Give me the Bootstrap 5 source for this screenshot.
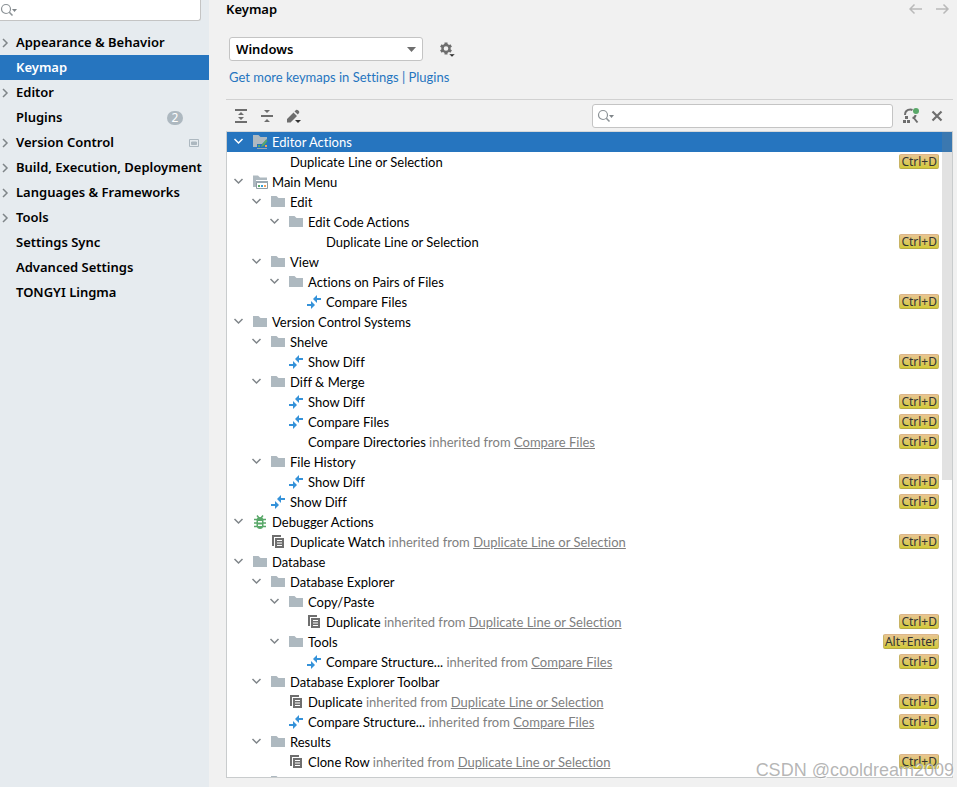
<!DOCTYPE html>
<html lang="en">
<head>
<meta charset="utf-8">
<meta name="viewport" content="width=device-width, initial-scale=1">
<title>Settings - Keymap</title>
<link href="https://cdn.jsdelivr.net/npm/bootstrap@5.3.0/dist/css/bootstrap.min.css" rel="stylesheet">
<style>
  body { font: 13px/20px Lato, "Noto Sans", sans-serif; font-variant-ligatures: none; color: #000; background: #f1f1f1; }
  svg { display: block; flex: none; }
  a { color: #2675bf; }
  .settings-side { flex: 0 0 209px; background: #e6ebef; }
  .side-search { width: 201px; height: 21px; border: 1px solid #c4c4c4; border-width: 0 1px 1px 0; border-radius: 0 0 3px 0; background: #fff; }
  .find-box input { min-width: 0; outline: 0; }
  .side-nav, .page-title, .scheme { font-family: "Noto Sans", sans-serif; }
  .side-nav { padding-top: 9px; }
  .side-nav a { height: 25px; color: #000; font-weight: 600; line-height: 25px; }
  .side-nav a.active { background: #2675bf; color: #fff; }
  .side-nav .twist { width: 16px; color: #7f8589; }
  .count-pill { width: 16px; height: 14px; margin-right: 26px; border-radius: 7px; background: #adb8c0; color: #fff; font-size: 12px; font-weight: 400; line-height: 14px; text-align: center; }
  .project-mark { margin-right: 10px; }
  .settings-main { padding: 0 4px 9px 17px; }
  .plain-btn { padding: 0; border: 0; background: none; color: #6e6e6e; }
  .page-title { margin: 0; font-size: 13px; line-height: 19px; font-weight: 600; }
  .history { padding-right: 3px; gap: 11px; }
  .history button { color: #b9b9b9; }
  .scheme { margin: 18px 0 0 3px; gap: 15px; }
  .scheme select { width: 194px; height: 24px; padding: 0 24px 0 6px; border: 1px solid #c4c4c4; border-radius: 3px; color: #000; font-size: 13px; font-weight: 600; line-height: 20px;
    background: #fff url("data:image/svg+xml,%3Csvg xmlns='http://www.w3.org/2000/svg' width='10' height='6'%3E%3Cpath fill='%236e6e6e' d='M0 0h10L5 6z'/%3E%3C/svg%3E") no-repeat right 6px center / 9px 5px; }
  .more-link { margin: 6px 0 12px 3px; }
  .tree-bar { height: 33px; padding: 0 10px 0 6px; border-top: 1px solid #d1d1d1; }
  .tree-search { flex: 0 1 301px; height: 24px; border: 1px solid #c4c4c4; border-radius: 3px; background: #fff; }
  .find-tools { margin-left: 8px; }
  .tree-box { min-height: 0; border: 1px solid #c9cccd; border-top-color: #d6d8d9; background: #fff; }
  .tree-row { height: 20px; padding-right: 13px; }
  .tree-row.chosen { background: #2675bf; color: #fff; }
  .twisty { width: 16px; height: 16px; margin: 0 5px 3px 4px; color: #7f8589; }
  .chosen .twisty { color: #fff; }
  .kind { width: 16px; height: 16px; margin-right: 4px; }
  .origin, .origin a { color: #808080; }
  kbd.keys { height: 15px; margin-bottom: 2px; padding: 0 1px; border: 1px solid #c9b465; border-top-color: #dcb68a; border-bottom-color: #b8ab45; border-radius: 2px; background: linear-gradient(#e8c592, #d2c93a); color: #333; font: 12px/13px "Noto Sans", sans-serif; }
  .scroll-thumb { top: 0; right: 0; width: 10px; height: 54%; background: rgba(128, 128, 128, .23); }
  .watermark { right: 3px; bottom: 7px; color: rgba(150, 150, 150, .7); font: 18px/20px "Liberation Sans", sans-serif; text-shadow: 1px 1px 0 rgba(255, 255, 255, .8); pointer-events: none; }
</style>
<script src="https://cdn.jsdelivr.net/npm/bootstrap@5.3.0/dist/js/bootstrap.bundle.min.js" defer></script>
</head>
<body class="vh-100 d-flex overflow-hidden">
<svg class="d-none">
  <symbol id="i-right" viewBox="0 0 16 16"><path d="M3 4l4 4-4 4" fill="none" stroke="currentColor" stroke-width="1.5"/></symbol>
  <symbol id="i-down" viewBox="0 0 16 16"><path d="M3.500 6l4 4 4-4" fill="none" stroke="currentColor" stroke-width="1.5"/></symbol>
  <symbol id="i-find" viewBox="0 0 18 16"><circle cx="6" cy="7" r="4.5" fill="none" stroke="#8c9296" stroke-width="1.2"/><path d="M9.300 10.300l3.200 3.200" stroke="#8c9296" stroke-width="1.600"/><path d="M12 7h5l-2.500 3z" fill="#7f8589"/></symbol>
  <symbol id="i-folder" viewBox="0 0 16 16"><path d="M1 2h5.500l2 2H15V13H1z" fill="#aeb9c0"/></symbol>
  <symbol id="i-editor" viewBox="0 0 16 16"><path d="M1 1h5.500l2 2H15v2l-5 5H5v3H1z" fill="#aeb9c0"/><path d="M5 14.500h10" stroke="#9aa7b0"/><path d="M6 11h2v2H6z" fill="#59a869"/><path d="M13 11h2v2h-2z" fill="#f4a15d"/><path d="M9 13l1-2.500 4-5 1.500 1.500-4 5z" fill="#59a869"/></symbol>
  <symbol id="i-menu" viewBox="0 0 16 16"><path d="M1 1.500h5l2 2h7V6H4v7H1z" fill="#aeb9c0"/><path d="M4.500 7.500h11v7h-11z" fill="#fff" stroke="#8f9ba3"/><path d="M4 7h12v2H4z" fill="#9aa7b0"/><path d="M6 11h2v2H6z" fill="#59a869"/><path d="M9 11h2v2H9z" fill="#389fd6"/><path d="M12 11h2v2h-2z" fill="#f4a15d"/></symbol>
  <symbol id="i-diff" viewBox="0 0 16 16"><g fill="#3592d9"><path d="M7 5l4-4v3h4v2h-4v3z"/><path d="M9 11l-4 4v-3H1v-2h4V7z"/></g></symbol>
  <symbol id="i-copy" viewBox="0 0 16 16"><path d="M2 1h9v2H4v9H2z" fill="#6e6e6e"/><path d="M5 4h9v10H5zM7 6v1h5V6zm0 2.500v1h5v-1zm0 2.500v1h5v-1z" fill="#6e6e6e" fill-rule="evenodd"/></symbol>
  <symbol id="i-bug" viewBox="0 0 16 16"><g stroke="#59a869" stroke-width="1.500" fill="none"><path d="M5 1.500l2 2.500M11 1.500L9 4M2 5.500h12M2 9h12M2 12.500h12"/></g><path d="M4.500 6Q5 3 8 3t3.500 3v5.500Q11 15 8 15t-3.500-3.500z" fill="#59a869"/><path d="M6 7h4v1.500H6zm0 3.500h4V12H6z" fill="#fff"/></symbol>
</svg>

<aside class="settings-side d-flex flex-column">
  <label class="side-search find-box d-flex align-items-center">
    <svg width="18" height="16"><use href="#i-find"/></svg>
    <input class="border-0 bg-transparent flex-grow-1 p-0" type="text" aria-label="Search settings">
  </label>
  <nav class="side-nav d-flex flex-column">
    <a class="d-flex align-items-center text-decoration-none" href="#"><svg class="twist" height="16"><use href="#i-right" width="16"/></svg>Appearance &amp; Behavior</a>
    <a class="active d-flex align-items-center text-decoration-none" href="#" aria-current="page"><span class="twist"></span>Keymap</a>
    <a class="d-flex align-items-center text-decoration-none" href="#"><svg class="twist" height="16"><use href="#i-right" width="16"/></svg>Editor</a>
    <a class="d-flex align-items-center text-decoration-none" href="#"><span class="twist"></span>Plugins<span class="count-pill ms-auto">2</span></a>
    <a class="d-flex align-items-center text-decoration-none" href="#"><svg class="twist" height="16"><use href="#i-right" width="16"/></svg>Version Control
      <svg class="project-mark ms-auto" width="10" height="8" fill="none" stroke="#adb8c0"><path d="M.5 .5h9v7h-9z"/><path d="M2.500 3h5v2.500h-5z" fill="#adb8c0"/></svg></a>
    <a class="d-flex align-items-center text-decoration-none text-nowrap" href="#"><svg class="twist" height="16"><use href="#i-right" width="16"/></svg>Build, Execution, Deployment</a>
    <a class="d-flex align-items-center text-decoration-none" href="#"><svg class="twist" height="16"><use href="#i-right" width="16"/></svg>Languages &amp; Frameworks</a>
    <a class="d-flex align-items-center text-decoration-none" href="#"><svg class="twist" height="16"><use href="#i-right" width="16"/></svg>Tools</a>
    <a class="d-flex align-items-center text-decoration-none" href="#"><span class="twist"></span>Settings Sync</a>
    <a class="d-flex align-items-center text-decoration-none" href="#"><span class="twist"></span>Advanced Settings</a>
    <a class="d-flex align-items-center text-decoration-none" href="#"><span class="twist"></span>TONGYI Lingma</a>
  </nav>
</aside>

<main class="settings-main d-flex flex-column flex-grow-1">
  <header class="d-flex justify-content-between align-items-center">
    <h1 class="page-title">Keymap</h1>
    <div class="history d-flex">
      <button class="plain-btn" type="button" aria-label="Back"><svg width="15" height="14" fill="none" stroke="currentColor" stroke-width="1.500"><path d="M13 6H1M5.500 1.500L1 6l4.500 4.500"/></svg></button>
      <button class="plain-btn" type="button" aria-label="Forward"><svg width="15" height="14" fill="none" stroke="currentColor" stroke-width="1.500"><path d="M1 6h12M8.500 1.500L13 6l-4.500 4.500"/></svg></button>
    </div>
  </header>

  <div class="scheme d-flex align-items-center">
    <select class="form-select" aria-label="Keymap scheme"><option>Windows</option></select>
    <button class="plain-btn" type="button" aria-label="Scheme actions">
      <svg width="18" height="18" viewBox="0 0 18 18"><g fill="currentColor"><path id="tooth" d="M6.500 2.500h3v3h-3zM6.500 11.500h3v3h-3z"/><use href="#tooth" transform="rotate(60 8 8.500)"/><use href="#tooth" transform="rotate(120 8 8.500)"/></g><circle cx="8" cy="8.500" r="3.500" fill="none" stroke="currentColor" stroke-width="2.400"/><path d="M11 14h6l-3 3z" fill="#333" stroke="#f1f1f1" stroke-width=".4"/></svg>
    </button>
  </div>
  <div class="more-link"><a class="text-decoration-none" href="#">Get more keymaps in Settings | Plugins</a></div>

  <div class="tree-bar d-flex align-items-center">
    <div class="d-flex me-auto gap-2">
      <button class="plain-btn" type="button" aria-label="Expand all"><svg width="18" height="16" fill="currentColor"><path d="M3 1h12v2H3zM3 13h12v2H3zM9 4l3 3H6zM9 12L6 9h6z"/></svg></button>
      <button class="plain-btn" type="button" aria-label="Collapse all"><svg width="18" height="16" fill="currentColor"><path d="M3 7h12v2H3zM9 5L6 2h6zM9 11l3 3H6z"/></svg></button>
      <button class="plain-btn" type="button" aria-label="Edit shortcut"><svg width="18" height="16" fill="currentColor"><path d="M3 14.500v-3.500l6.500-6.500 3.500 3.500-6.500 6.500zM10.500 3.500l1.500-1.500q1-.8 2 .2l.8.800q1 1 .2 2L13.800 6.500z"/><path d="M11 12h6l-3 3z" fill="#333"/></svg></button>
    </div>
    <label class="tree-search find-box d-flex align-items-center px-1">
      <svg width="18" height="16"><use href="#i-find"/></svg>
      <input class="border-0 bg-transparent flex-grow-1 p-0" type="text" aria-label="Search actions">
    </label>
    <div class="find-tools d-flex align-items-center gap-2">
      <button class="plain-btn" type="button" aria-label="Find actions by shortcut"><svg width="22" height="18" viewBox="0 0 22 18"><path d="M4 8q0-5.500 5.500-5.500 1 0 2 .5M14.500 8q0 2.500-3 3M12.500 10.500l4 5" fill="none" stroke="currentColor" stroke-width="2"/><path d="M4 9h3v3H4zM2 13h3v3H2zM6 13h3v3H6z" fill="currentColor"/><circle cx="15" cy="4" r="3" fill="#59a869"/></svg></button>
      <button class="plain-btn" type="button" aria-label="Close"><svg width="12" height="12" stroke="currentColor" stroke-width="2.200"><path d="M1.500 1.500l9 9M10.500 1.500l-9 9"/></svg></button>
    </div>
  </div>

  <div class="tree-box position-relative overflow-hidden flex-grow-1">
    <div id="actionTree" role="tree"></div>
    <div class="scroll-thumb position-absolute"></div>
  </div>
</main>
<div class="watermark position-absolute">CSDN @cooldream2009</div>

<script>
  // [depth, icon, label, shortcut, inherited from]; an icon with a leading + marks an open group
  const line = 'Duplicate Line or Selection', files = 'Compare Files', key = 'Ctrl+D';
  const rows = [
    [0, '+editor', 'Editor Actions'], [1, '', line, key],
    [0, '+menu', 'Main Menu'],
    [1, '+folder', 'Edit'], [2, '+folder', 'Edit Code Actions'], [3, '', line, key],
    [1, '+folder', 'View'], [2, '+folder', 'Actions on Pairs of Files'], [3, 'diff', files, key],
    [0, '+folder', 'Version Control Systems'],
    [1, '+folder', 'Shelve'], [2, 'diff', 'Show Diff', key],
    [1, '+folder', 'Diff & Merge'], [2, 'diff', 'Show Diff', key], [2, 'diff', files, key], [2, '', 'Compare Directories', key, files],
    [1, '+folder', 'File History'], [2, 'diff', 'Show Diff', key], [1, 'diff', 'Show Diff', key],
    [0, '+bug', 'Debugger Actions'], [1, 'copy', 'Duplicate Watch', key, line],
    [0, '+folder', 'Database'],
    [1, '+folder', 'Database Explorer'], [2, '+folder', 'Copy/Paste'], [3, 'copy', 'Duplicate', key, line],
    [2, '+folder', 'Tools', 'Alt+Enter'], [3, 'diff', 'Compare Structure...', key, files],
    [1, '+folder', 'Database Explorer Toolbar'], [2, 'copy', 'Duplicate', key, line], [2, 'diff', 'Compare Structure...', key, files],
    [1, '+folder', 'Results'], [2, 'copy', 'Clone Row', key, line],
    [1, '+folder', '']
  ];
  const icon = (cls, name) => `<svg class="${cls}">${name ? `<use href="#i-${name}" width="16" height="16"/>` : ''}</svg>`;
  document.getElementById('actionTree').innerHTML = rows.map(([depth, kind, label, keys, from], i) => `
    <div class="tree-row d-flex align-items-center text-nowrap${i ? '' : ' chosen'}" role="treeitem" style="padding-left:${depth * 18}px">
      ${icon('twisty', kind[0] === '+' ? 'down' : '')}${icon('kind', kind.replace('+', ''))}
      <span>${label.replace('&', '&amp;')}${from ? ` <span class="origin">inherited from <a href="#">${from}</a></span>` : ''}</span>
      ${keys ? `<kbd class="keys ms-auto">${keys}</kbd>` : ''}
    </div>`).join('');
</script>
</body>
</html>
